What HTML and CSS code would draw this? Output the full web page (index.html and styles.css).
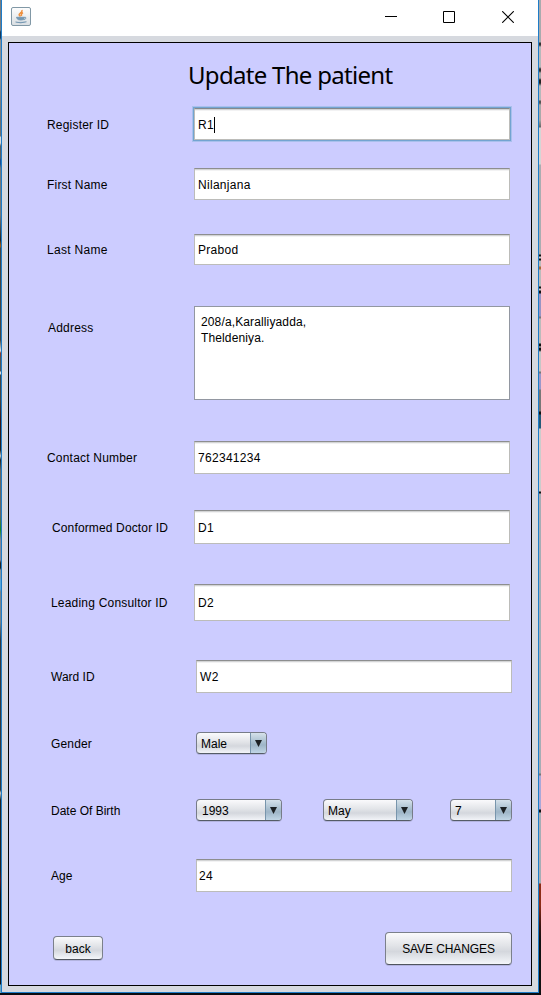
FILE: index.html
```html
<!DOCTYPE html>
<html lang="en">
<head>
<meta charset="utf-8">
<title>Update The patient</title>
<link rel="stylesheet" href="styles.css">
</head>
<body>
<div class="window">
  <header class="titlebar">
    <svg class="app-icon" width="20" height="19" viewBox="0 0 20 19">
      <defs><linearGradient id="tile" x1="0" y1="0" x2="0" y2="1"><stop offset="0" stop-color="#fefefe"/><stop offset="1" stop-color="#d9dee2"/></linearGradient></defs>
      <rect x=".5" y=".5" width="19" height="18" rx="1.5" fill="url(#tile)" stroke="#8198a6"/>
      <path d="M11 3Q11.400 4.800 9.400 6Q6.800 8 9.500 9.300M12 5.700Q9.700 7 10.500 9" fill="none" stroke="#ee8e3c" stroke-width="1.500"/>
      <path d="M5.500 10.300H13V11.800Q12.500 13 9.800 13T6.200 11.800ZM4.500 15Q9.500 16.700 15.500 14.800" fill="#7698b2" stroke="#7698b2"/>
      <path d="M13 10.300Q15.500 9.800 14.800 11.500Q14.200 12.500 12.500 12.700" fill="none" stroke="#7698b2"/>
    </svg>
    <div class="controls">
      <svg width="12" height="12" viewBox="0 0 12 12"><path d="M0 5.500H12" stroke="#000"/></svg>
      <svg width="12" height="12" viewBox="0 0 12 12"><path d="M.5 .5H11.500V11.500H.5Z" fill="none" stroke="#000"/></svg>
      <svg width="12" height="12" viewBox="0 0 12 12"><path d="M.2 .2L11.800 11.800M11.800 .2L.2 11.800" stroke="#000" stroke-width="1.100"/></svg>
    </div>
  </header>
  <main class="panel">
    <h1>Update The patient</h1>
    <div class="row register"><span class="label">Register ID</span><div class="field focused">R1<i class="caret"></i></div></div>
    <div class="row first"><span class="label">First Name</span><div class="field">Nilanjana</div></div>
    <div class="row last"><span class="label">Last Name</span><div class="field">Prabod</div></div>
    <div class="row address"><span class="label">Address</span><div class="area">208/a,Karalliyadda,<br>Theldeniya.</div></div>
    <div class="row contact"><span class="label">Contact Number</span><div class="field">762341234</div></div>
    <div class="row doctor"><span class="label">Conformed Doctor ID</span><div class="field">D1</div></div>
    <div class="row consultor"><span class="label">Leading Consultor ID</span><div class="field">D2</div></div>
    <div class="row ward shifted"><span class="label">Ward ID</span><div class="field">W2</div></div>
    <div class="row gender shifted"><span class="label">Gender</span><div class="combo sex"><span>Male</span><b><svg width="7" height="7" viewBox="0 0 7 7"><path d="M0 0H7L3.500 7Z"/></svg></b></div></div>
    <div class="row birth shifted"><span class="label">Date Of Birth</span>
      <div class="date">
        <div class="combo year"><span>1993</span><b><svg width="7" height="7" viewBox="0 0 7 7"><path d="M0 0H7L3.500 7Z"/></svg></b></div>
        <div class="combo month"><span>May</span><b><svg width="7" height="7" viewBox="0 0 7 7"><path d="M0 0H7L3.500 7Z"/></svg></b></div>
        <div class="combo day"><span>7</span><b><svg width="7" height="7" viewBox="0 0 7 7"><path d="M0 0H7L3.500 7Z"/></svg></b></div>
      </div>
    </div>
    <div class="row age shifted"><span class="label">Age</span><div class="field">24</div></div>
    <footer class="actions"><div class="button back">back</div><div class="button save">SAVE CHANGES</div></footer>
  </main>
</div>
</body>
</html>
```
FILE: styles.css
```css
* { box-sizing: border-box; }
html { height: 100%; background: #0c0c10; }
body {
  margin: 0;
  height: 995px;
  overflow: hidden;
  padding-left: 1px;
  font: 12px/16px "Liberation Sans", Arial, sans-serif;
  color: #000;
  background:
    linear-gradient(#0c0c10, #0c0c10) 0 993px / 541px 2px no-repeat,
    linear-gradient(#777d82 0 30px, #173a5c 32px 38px, #8b9094 40px 80px, #6d7073 120px 136px, #ddd 137px 143px, #5c6064 146px 158px, #174f94 160px 164px, #77797c 168px 215px, #222 240px, #a35a12 245px 247px, #444 248px 340px, #ddd 350px 351px, #8a3c30 353px 355px, #555 358px 371px, #ddd 372px 374px, #444 375px 400px, #3b1518 420px, #222 450px, #ccc 456px, #222 460px, #666 470px 515px, #168a22 530px, #889 540px 560px, #222 563px 568px, #88949c 570px 578px, #57a7dc 580px 589px, #7a838b 592px 622px, #333840 640px 790px, #ccc 793px, #222 800px 870px, #5a1518 880px, #15151a 895px 984px, #6fa9c4 985px 992px) 0 0 / 1px 993px no-repeat,
    linear-gradient(#a8abae 0 42px, #333 43px 45px, #b6b9bb 47px 67px, #333 69px 71px, #aaa 73px 78px, #222 80px 83px, #b6b9bb 86px 100px, #555 101px 103px, #aaa 105px 120px, #666 127px, #d5d5d5 128px 164px, #aaadb1 165px 254px, #111 255px 256px, #ccc 257px 258px, #111 259px 260px, #bbb 261px 266px, #a76b38 267px 269px, #bbb 270px 286px, #111 287px 288px, #ccc 289px 290px, #111 291px 293px, #9895c4 294px 316px, #777 317px 318px, #bbb 319px 343px, #111 344px 346px, #ddd 347px, #111 348px 350px, #c6c6c6 352px 371px, #777 372px 373px, #9b98ca 374px 389px, #777 390px 411px, #111 412px 414px, #255a78 415px 428px, #ccc 429px 491px, #111 492px 493px, #a6adb5 494px 773px, #777 774px 775px, #aaa8d8 776px 809px, #111 810px 812px, #a6adb5 813px 883px, #8c2c16 884px 905px, #3b1410 925px, #111 940px) 539px 0 / 2px 993px no-repeat;
}
.window { width: 538px; height: 993px; border: 1px solid #1e7cc8; border-top: 0; background: #d6d9df; }
.titlebar { display: flex; justify-content: space-between; height: 36px; padding: 7px 24px 0 9px; background: #fff; }
.controls { display: flex; gap: 47px; padding-top: 4px; }
.controls svg { display: block; }
.controls svg:first-child { margin-right: -1px; }
.panel { width: 524px; height: 944px; margin: 6px; border: 1px solid #000; background: #ccf; display: flex; flex-direction: column; }
h1 { margin: 0; height: 65px; padding-left: 179px; font: 24px/64px "Noto Sans", "DejaVu Sans", sans-serif; letter-spacing: -.7px; white-space: nowrap; }
.row { display: grid; grid-template-columns: 147px 316px; align-items: center; padding-left: 38px; white-space: nowrap; flex: none; }
.shifted { grid-template-columns: 149px 316px; }
.label { padding-top: 1px; letter-spacing: .2px; }
.register { height: 32px; }
.first { height: 32px; margin-top: 28px; }
.last { height: 31px; margin-top: 34px; }
.address { height: 94px; margin-top: 41px; align-items: start; }
.contact { height: 33px; margin-top: 41px; }
.doctor { height: 34px; margin-top: 36px; }
.consultor { height: 37px; margin-top: 40px; }
.ward { height: 33px; margin-top: 39px; }
.gender { height: 22px; margin-top: 39px; }
.birth { height: 22px; margin-top: 45px; }
.age { height: 33px; margin-top: 38px; }
.last .label { letter-spacing: .3px; }
.address .label { padding: 14px 0 0 1px; }
.doctor .label { padding-left: 5px; letter-spacing: .14px; }
.consultor .label, .shifted .label { padding-left: 4px; }
.shifted .label { letter-spacing: 0; }
.gender .label { letter-spacing: .15px; }
.field { display: flex; align-items: center; height: 100%; padding: 1px 3px 0; background: #fff; border: 1px solid #bcbcb9; border-top-color: #8d8e8f; box-shadow: inset 0 1px #d3d4d5, inset 0 2px #f2f2f3; letter-spacing: .3px; }
.focused { outline: 1px solid #73a4d1; border-top-color: #84898d; box-shadow: inset 0 1px #d3d4d5, inset 0 2px #f2f2f3, 0 0 0 2px #a9c0ec; }
.age .field { padding-left: 2px; }
.caret { width: 1px; height: 16px; background: #000; }
.area { height: 94px; padding: 7px 6px; border: 1px solid #9297a1; background: #fff; letter-spacing: .13px; }
.date { display: flex; }
.combo { display: flex; height: 22px; border: 1px solid #777c88; border-bottom-color: #555c66; border-radius: 4px; overflow: hidden; background: linear-gradient(#fafafc, #e2e4e8 45%, #d4d7dd 65%, #f2f4f8); box-shadow: 0 1px #b3b4df; }
.combo span { flex: 1; padding: 3px 0 0 4px; }
.combo b { width: 16px; padding: 7px 0 0 4px; border-left: 1px solid #7895ac; background: linear-gradient(#d5e1ea, #a9bfcf 45%, #9eb5c7 60%, #c1d6e6); }
.combo svg { display: block; fill: #1c2023; }
.sex { width: 71px; }
.year { width: 86px; }
.month { width: 90px; margin: 0 37px 0 41px; }
.day { width: 62px; }
.year span { padding-left: 5px; }
.actions { display: flex; justify-content: space-between; align-items: flex-start; height: 33px; margin-top: 40px; padding: 0 19px 0 44px; }
.button { display: flex; align-items: center; justify-content: center; border: 1px solid #7b808b; border-bottom-color: #50555f; border-radius: 4px; background: linear-gradient(#fafafc, #e2e4e8 40%, #d4d7dd 60%, #f4f6fa); box-shadow: 0 1px #b3b4df; }
.back { width: 50px; height: 24px; margin-top: 4px; padding-top: 1px; }
.save { width: 127px; height: 33px; letter-spacing: -.1px; }
```
